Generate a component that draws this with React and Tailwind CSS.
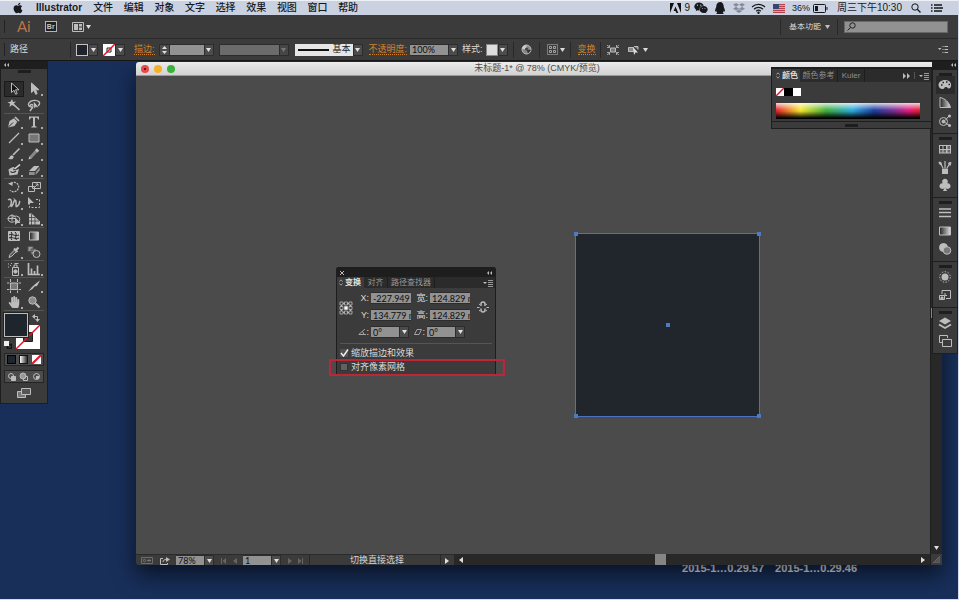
import React from "react";
import { FaApple, FaWeixin, FaQq, FaDropbox, FaHandPaper } from "react-icons/fa";

const G = "#bdbdbd";

function Svg({ w = 14, h = 14, children, className = "" }) {
  return (
    <svg width={w} height={h} viewBox={`0 0 ${w} ${h}`} fill="none" stroke={G} strokeWidth="1" aria-hidden="true" className={`block shrink-0 ${className}`}>
      {children}
    </svg>
  );
}

function Caret({ className = "" }) {
  return (
    <svg width="5" height="4" viewBox="0 0 5 4" aria-hidden="true" className={`block shrink-0 ${className}`}>
      <path d="M0 0h5L2.500 4z" fill="currentColor" />
    </svg>
  );
}

function DropButton({ label, dim }) {
  return (
    <button aria-label={label} disabled={dim} className={`flex h-3 w-[10px] shrink-0 items-center justify-center border border-[#2b2c2b] bg-[#4b4c4b] ${dim ? "text-[#7d7d7d]" : "text-[#e0e0e0]"}`}>
      <Caret />
    </button>
  );
}

function Field({ label, value, className = "" }) {
  return (
    <input aria-label={label} defaultValue={value} className={`h-3 min-w-0 shrink-0 border-y border-[#2b2c2b] bg-[#929292] pl-[2px] font-[Lato,'Liberation_Sans',sans-serif] text-[9px] leading-none text-[#0c0c0c] outline-none ${className}`} />
  );
}

function Divider({ className = "" }) {
  return <span className={`h-4 w-px shrink-0 bg-[#272827] ${className}`} />;
}

function Grip({ className = "" }) {
  return <span className={`mx-auto block h-[3px] w-[13px] shrink-0 bg-[#1d1e1d] ${className}`} />;
}

function MenuIcon() {
  return (
    <Svg w={10} h={8}>
      <path d="M0 3h4L2 5z" fill={G} stroke="none" />
      <path d="M5 1.500h5M5 3.500h5M5 5.500h5M5 7.500h5" stroke="#999" />
    </Svg>
  );
}

const menus = ["文件", "编辑", "对象", "文字", "选择", "效果", "视图", "窗口", "帮助"];

function MenuBar() {
  return (
    <header className="flex h-[15px] shrink-0 items-center border-t border-[#edf0f5] bg-[#cad2e1] text-[10px] leading-none text-[#17191d]">
      <button aria-label="Apple" className="ml-3"><FaApple size={12} /></button>
      <button className="ml-3 font-bold">Illustrator</button>
      <nav className="ml-[11px] flex w-[265px] shrink-0 justify-between font-medium">
        {menus.map((m) => <button key={m}>{m}</button>)}
      </nav>
      <div className="ml-auto flex items-center pr-[15px]">
        <svg width="11" height="10" viewBox="0 0 11 10" aria-hidden="true"><path d="M0 0h4L0 10zM7 0h4v10zM5.500 3.500 8.300 10H6.400L5.600 8H3.600z" fill="#111" /></svg>
        <span className="ml-[3px]">9</span>
        <FaWeixin size={14} className="ml-1" />
        <FaQq size={12} className="ml-[6px]" />
        <FaDropbox size={12} className="ml-[7px] text-[#858b98]" />
        <svg width="15" height="11" viewBox="0 0 15 11" fill="none" stroke="#15171a" strokeWidth="1.200" className="ml-[6px]" aria-hidden="true">
          <path d="M1 4a9.500 9.500 0 0 1 13 0M3 6.200a6.500 6.500 0 0 1 9 0M5.200 8.200a3.500 3.500 0 0 1 4.600 0" /><circle cx="7.500" cy="9.800" r=".6" fill="#15171a" />
        </svg>
        <svg width="12" height="9" viewBox="0 0 12 9" className="ml-[7px]" aria-hidden="true">
          <path d="M0 0h12v9H0z" fill="#c9a9ae" /><path d="M0 .5h12M0 2.500h12M0 4.500h12M0 6.500h12M0 8.500h12" stroke="#b2424c" /><path d="M0 0h6v5H0z" fill="#39456f" />
        </svg>
        <span className="ml-[7px] text-[9px] font-medium">36%</span>
        <svg width="15" height="9" viewBox="0 0 15 9" className="ml-[3px]" aria-hidden="true">
          <rect x=".5" y=".5" width="12" height="8" rx="1" fill="none" stroke="#15171a" /><path d="M2 2h3v5H2zM13.500 3h1v3h-1z" fill="#15171a" />
        </svg>
        <span className="ml-[9px]">周三下午10:30</span>
        <button aria-label="搜索" className="ml-[9px]">
          <svg width="10" height="10" viewBox="0 0 10 10" fill="none" stroke="#15171a" aria-hidden="true"><circle cx="4" cy="4" r="3.200" /><path d="m6.300 6.300 3.200 3.200" strokeWidth="1.300" /></svg>
        </button>
        <button aria-label="通知中心" className="ml-[10px]">
          <svg width="12" height="8" viewBox="0 0 12 8" stroke="#15171a" strokeWidth="1.300" aria-hidden="true"><path d="M0 1h1.500M0 4h1.500M0 7h1.500M3 1h8M3 4h9M3 7h8" /></svg>
        </button>
      </div>
    </header>
  );
}

function AppBar() {
  return (
    <div className="flex h-6 shrink-0 items-center border-b border-[#292a29] bg-[#3a3b3a]">
      <span className="ml-1 h-[13px] w-px bg-[#222]" />
      <span className="ml-3 font-[Lato,sans-serif] text-[15px] leading-none text-[#b87549]">Ai</span>
      <button aria-label="Bridge" className="ml-[14px] flex h-[11px] w-3 items-center justify-center border border-[#b5b5b5] bg-[#202120] text-[7px] font-bold leading-none text-[#c4c4c4]">Br</button>
      <button aria-label="排列文档" className="ml-[15px] flex items-center gap-[2px] text-[#ddd]">
        <Svg w={12} h={10}><path d="M.5.5h11v9H.5z" /><path d="M2 2h4v6H2zM7 2h3v2.500H7zM7 5.500h3V8H7z" fill={G} stroke="none" /></Svg>
        <Caret />
      </button>
      <div className="ml-auto flex items-center pr-[10px]">
        <Divider />
        <div className="relative ml-2 flex items-center">
          <select aria-label="工作区" className="w-[41px] appearance-none bg-transparent text-[8px] leading-none text-[#dcdcdc] outline-none"><option>基本功能</option></select>
          <Caret className="pointer-events-none absolute right-0 text-[#c0c0c0]" />
        </div>
        <Divider className="ml-[7px]" />
        <label className="ml-[6px] flex h-3 w-[104px] items-center border border-[#686868] bg-[#919191] pl-[2px]">
          <Svg w={9} h={9}><circle cx="5.500" cy="3.500" r="2.700" stroke="#222" /><path d="M3.500 5.500.500 8.500" stroke="#222" /></Svg>
          <input aria-label="搜索帮助" className="h-full min-w-0 flex-1 bg-transparent text-[9px] outline-none" />
        </label>
      </div>
    </div>
  );
}

function ControlBar() {
  return (
    <div className="flex h-[22px] shrink-0 items-center border-b border-[#161716] bg-[#3a3b3a] text-[9px] leading-none text-[#dadada]">
      <span className="ml-1 h-[13px] w-px bg-[#222]" />
      <span className="ml-[5px] w-[60px] shrink-0">路径</span>
      <Divider />
      <button aria-label="填色" className="ml-[5px] h-3 w-3 shrink-0 border border-[#c4c4c4] bg-[#1f242c]" />
      <DropButton label="填色选项" />
      <button aria-label="描边颜色" className="ml-[5px] h-3 w-3 shrink-0 bg-white">
        <Svg w={12} h={12}><path d="M4 4h4v4H4z" stroke="#222" /><path d="M0 12 12 0" stroke="#e3152a" strokeWidth="1.500" /></Svg>
      </button>
      <DropButton label="描边颜色选项" />
      <button className="ml-[9px] shrink-0 border-b border-dotted border-[#d0812e] text-[#d0812e]">描边:</button>
      <button aria-label="调整描边粗细" className="ml-1 flex h-3 w-[11px] shrink-0 items-center justify-center border border-[#2b2c2b] bg-[#4b4c4b]">
        <Svg w={5} h={8}><path d="M0 3h5L2.500 0zM0 5h5L2.500 8z" fill="#e0e0e0" stroke="none" /></Svg>
      </button>
      <Field label="描边粗细" value="" className="w-[34px]" />
      <DropButton label="描边粗细选项" />
      <div className="relative ml-[5px] flex shrink-0 items-center">
        <select disabled aria-label="变量宽度配置文件" className="h-3 w-[70px] appearance-none border border-[#2b2c2b] bg-[#6a6b6a] opacity-100"><option></option></select>
        <span className="pointer-events-none absolute right-0 flex h-3 w-[10px] items-center justify-center border border-[#2b2c2b] bg-[#454645] text-[#777]"><Caret /></span>
      </div>
      <button aria-label="画笔定义" className="ml-[6px] flex h-3 w-[58px] shrink-0 items-center gap-1 bg-[#e6e6e6] pl-[3px] text-[#222]">
        <Svg w={31} h={2}><path d="M0 1h31" stroke="#111" strokeWidth="2" /></Svg>基本
      </button>
      <DropButton label="画笔选项" />
      <button className="ml-[6px] shrink-0 border-b border-dotted border-[#d0812e] text-[#d0812e]">不透明度:</button>
      <Field label="不透明度值" value="100%" className="ml-[3px] w-[38px]" />
      <DropButton label="不透明度选项" />
      <span className="ml-1 shrink-0">样式:</span>
      <button aria-label="图形样式" className="ml-[3px] h-3 w-3 shrink-0 border border-[#888] bg-[#dedede]" />
      <DropButton label="图形样式选项" />
      <Divider className="ml-[5px]" />
      <button aria-label="重新着色图稿" className="ml-[7px]">
        <Svg w={11} h={11}><circle cx="5.500" cy="5.500" r="4.500" fill="#888" /><path d="M5.500 5.500V1A4.500 4.500 0 0 0 1 5z" fill="#ccc" stroke="none" /><path d="M5.500 5.500 10 6 7 9.600z" fill="#333" stroke="none" /><circle cx="5.500" cy="5" r="1.500" fill="#444" stroke="none" /></Svg>
      </button>
      <Divider className="ml-[7px]" />
      <button aria-label="对齐选项" className="ml-[7px] flex items-center gap-[2px] text-[#ddd]">
        <Svg w={11} h={11}><path d="M.5.5h10v10H.5z" strokeDasharray="1 1" /><path d="M2.500 2.500h2v2h-2zM6.500 2.500h2v2h-2zM2.500 6.500h2v2h-2zM6.500 6.500h2v2h-2z" strokeWidth=".8" /></Svg>
        <Caret />
      </button>
      <Divider className="ml-[5px]" />
      <button className="ml-[7px] shrink-0 border-b border-dotted border-[#d0812e] text-[#d0812e]">变换</button>
      <Divider className="ml-1" />
      <button aria-label="隔离选中的对象" className="ml-[6px]">
        <Svg w={12} h={10}><path d="M3.500 3h5v4h-5z" fill="#777" /><path d="M0 0l3 2.500M12 0 9 2.500M0 10l3-2.500M12 10 9 7.500M0 2.500h2.500V0M12 2.500H9.500V0M0 7.500h2.500V10M12 7.500H9.500V10" strokeWidth=".8" /></Svg>
      </button>
      <button aria-label="选择类似的对象" className="ml-[9px] flex items-center gap-1 text-[#ddd]">
        <Svg w={11} h={10}><path d="M.5 2.500h5v4h-5zM6 1.500h4v3" fill="#888" /><path d="m5 2 5 5.500H7.500L6 10z" fill="#ddd" stroke="none" /></Svg>
        <Caret />
      </button>
      <button aria-label="控制面板菜单" className="ml-auto mr-[10px]">
        <Svg w={10} h={7}><path d="M0 2h3.500L1.700 4z" fill={G} stroke="none" /><path d="M4.500.5h1M6.500.5H10M4.500 3.500h1M6.500 3.500H10M4.500 6.500h1M6.500 6.500H10" /></Svg>
      </button>
    </div>
  );
}

const tools = [
  [
    ["选择工具", <path d="M4.500 1v9.500L7 8.300l1.700 4 1.500-.7-1.700-3.800H12z" fill="#111" />, 0, 1],
    ["直接选择工具", <path d="M4.500 1v9.500L7 8.300l1.700 4 1.500-.7-1.700-3.800H12z" fill={G} />, 1],
    ["魔棒工具", <><path d="m6.500 6.500 6 5.500" strokeWidth="1.600" /><path d="m5 1 1 3 3-.5L6.800 5.800 8 8.500 5 7 2.500 9l.6-3.200L.5 4.300l3-.5z" fill={G} stroke="none" /></>],
    ["套索工具", <><path d="M5 9C1.500 9 .8 6.500 2 4.800 4 2 9.800 1.500 12 3.800c1.200 1.400.4 3-1 3.700M4.500 9c-2-1-1-3 .5-2.500s1.500 2 .5 3L3 13" strokeWidth="1.400" /><path d="M6.500 3v8l2-1.800 3.500.3z" fill={G} stroke="#333" strokeWidth=".5" /></>],
  ],
  [
    ["钢笔工具", <><path d="M1 12.500 2.500 6 7 3.300 10.300 6.800 7.500 11z" fill={G} stroke="none" /><path d="M1 12.500 6 7.500" stroke="#333" /><path d="m8 2 4 4" strokeWidth="1.700" /></>, 1],
    ["文字工具", <path d="M2 1.500h10v3h-1l-.8-1.700H8V11l1.700.7v.8H4.300v-.8L6 11V2.800H3.800L3 4.500H2z" fill={G} stroke="none" />, 1],
    ["直线段工具", <path d="M2 12 12 2" strokeWidth="1.300" />, 1],
    ["矩形工具", <path d="M2 3h10v8H2z" fill="#777" />, 1],
    ["画笔工具", <><path d="M12.500 1.500 6 8" strokeWidth="1.600" /><path d="M1 11.500c2-.2 1.500-3 4-3.300l1.800 1.600C6.500 12.500 3 13 1 11.500z" fill={G} stroke="none" /></>, 1],
    ["铅笔工具", <><path d="m3 11 6-6.500" stroke="#888" strokeWidth="3" /><path d="m9 4.500 2-2" strokeWidth="3.400" /><path d="m1.500 12.500.7-3 2 2z" fill={G} stroke="none" /></>, 1],
    ["斑点画笔工具", <><path d="M1.500 6.500c3-2 4-2.500 6-2.500L6 7c3 1 4-1 6-1l-1.500 5.500-8 1z" fill={G} stroke="none" /><path d="M13 1.500 7.500 6" stroke="#ddd" strokeWidth="1.600" /><path d="M3.500 8.500c1.500 1.500 4 1 5.500-.5" stroke="#333" strokeWidth="1.200" /></>, 1],
    ["橡皮擦工具", <><path d="m2 8 5-5h5.500L8 8z" fill={G} stroke="none" /><path d="M2 9h5.700v3H2zM8.700 9l4-4.500v3l-4 4.500z" fill="#8f8f8f" stroke="none" /></>, 1],
  ],
  [
    ["旋转工具", <><path d="M4 3.500C8 .5 12.500 4 11.500 8S5 13 3 10" strokeDasharray="2 1" strokeWidth="1.300" /><path d="M1 3.500 5.500 2v4z" fill={G} stroke="none" /></>, 1],
    ["比例缩放工具", <><path d="M5.500 2.500h8v6h-8zM1.500 6.500h6v5h-6z" /><path d="m7 8 4-4M8.500 4H11v2.500" strokeWidth=".9" /></>, 1],
    ["宽度工具", <><path d="M1 4c3-2 4 1 3 4s1 3.500 2 0 2.500-5.500 3-2-1 5.500 1.500 4S12 6 13 5" strokeWidth="1.500" /><path d="M1 11.500 5 8M6.500 2.500l1.500 1" /></>, 1],
    ["自由变换工具", <><path d="M2.500 3v8.500h10V3.500H8" strokeDasharray="2 1.500" /><path d="M1 1v8l2-2h4z" fill={G} stroke="none" /></>],
    ["形状生成器工具", <><path d="M7.500 9.500A4 3.500 0 1 1 8 4.500M5 6.500A4 3.500 0 1 1 9 11M1 6.500h8M5 2.500v7" /><path d="M8 5v8l2-2h3.500z" fill={G} stroke="none" /></>, 1],
    ["透视网格工具", <><path d="M2 1.500h2.500l8.500 8v3H2z" fill={G} stroke="none" /><path d="M4.500 2v11M8 5v8M2 5.500h6M2 9h10" stroke="#333" strokeWidth=".7" /></>, 1],
  ],
  [
    ["网格工具", <><path d="M1.500 2.500h11v9h-11z" fill={G} /><path d="M4 3c3 3-2 5 1 8M8 3c3 3-1 5 1.500 8M2 6c3-2 6 2 10 0M2 9c3-2 6 2 10 0" stroke="#222" /></>],
    ["渐变工具", <path d="M2.500 3h9v8h-9z" fill="url(#tg)" />],
    ["吸管工具", <><path d="m2 12.500 1-3L7.500 5l1.800 1.700-4.500 4.500z" fill="#555" /><path d="M7 3.500 10.500 7M9 5l2.500-2.500" strokeWidth="2" /></>, 1],
    ["混合工具", <><path d="M1 1.500h5v5H1zM4 4h5v5H4z" fill="#999" stroke="#555" /><circle cx="9.500" cy="9" r="3.500" fill="#454645" /></>],
  ],
  [
    ["符号喷枪工具", <><path d="M5.500 5.500h6v8h-6zM7 5V3h3v2" /><circle cx="8.500" cy="9.500" r="1.700" fill={G} /><path d="M1 2h1M3 3.500h1M1 5h1M4 1.500h1M7.500 1.500h4" /></>, 1],
    ["柱形图工具", <path d="M1.500 1v11.500H13M4.500 12V6.500M7.500 12V9M10.500 12V3.500" strokeWidth="1.700" />, 1],
  ],
  [
    ["画板工具", <><path d="M3.500 4h7v6.500h-7z" fill="#777" /><path d="M3.500 0v3M10.500 0v3M3.500 11.500V14M10.500 11.500V14M0 4h2.500M0 10.500h2.500M11.500 4H14M11.500 10.500H14" /></>],
    ["切片工具", <path d="M1 12.500C4 10 4 7.500 13 1.500L10 7l-2.500.5-2 2.500z" fill={G} stroke="none" />, 1],
    ["抓手工具", null, 1],
    ["缩放工具", <><circle cx="5.500" cy="5.500" r="3.700" fill="#8a8a8a" /><path d="m8.500 8.500 4 4" strokeWidth="2.200" /></>],
  ],
];

function Toolbar() {
  return (
    <aside aria-label="工具" className="absolute left-0 top-0 w-12 border-x border-b border-[#1d1e1d] bg-[#3a3b3a]">
      <div className="flex h-2 items-center bg-[#1d1e1d] pl-[3px]"><Chevrons /></div>
      <Grip className="mb-2 mt-px" />
      {tools.map((group, i) => (
        <div key={i} className="mx-[3px] grid grid-cols-2 border-b border-[#545554]">
          {group.map(([name, art, fly, on]) => (
            <button key={name} aria-label={name} className={`relative flex h-4 items-center justify-center ${on ? "border border-[#191a19] bg-[#2a2b2a]" : ""}`}>
              {art ? <Svg>{art}</Svg> : <FaHandPaper size={12} color={G} />}
              {fly ? <span className="absolute bottom-px right-px h-[2px] w-[2px] bg-[#aaa]" /> : null}
            </button>
          ))}
        </div>
      ))}
      <div className="relative mx-[3px] mt-[2px] h-9">
        <button aria-label="描边" className="absolute bottom-0 left-3 h-6 w-6 bg-white">
          <Svg w={24} h={24}><path d="M7.500 7.500h9v9h-9z" fill="#3a3b3a" stroke="#222" /><path d="M0 24 24 0" stroke="#e3152a" strokeWidth="1.500" /></Svg>
        </button>
        <button aria-label="填色" className="absolute left-0 top-0 h-6 w-6 border border-[#bcbcbc] bg-[#1f252d] shadow-[0_0_0_1px_#222]" />
        <button aria-label="互换填色和描边" className="absolute right-1 top-px"><Svg w={8} h={8}><path d="M2 2.500h3.500V6" /><path d="M3 0v5L0 2.500zM3 5h5L5.500 8z" fill={G} stroke="none" /></Svg></button>
        <button aria-label="默认填色和描边" className="absolute bottom-0 left-0"><Svg w={8} h={8}><path d="M3.500 3.500h4v4h-4z" stroke="#111" strokeWidth="1.500" /><path d="M0 0h5v5H0z" fill="#eee" stroke="none" /></Svg></button>
      </div>
      <div className="mx-[3px] mt-1 grid h-[13px] grid-cols-3 items-center justify-items-center border border-[#242524] bg-[#4b4c4b]">
        <button aria-label="颜色" className="h-[9px] w-[9px] border border-black bg-[#1f252d]" />
        <button aria-label="渐变" className="h-[9px] w-[9px] border border-[#111] bg-linear-to-r from-white to-[#333]" />
        <button aria-label="无" className="h-[9px] w-[9px] bg-white"><Svg w={9} h={9}><path d="M0 9 9 0" stroke="#e3152a" strokeWidth="2" /></Svg></button>
      </div>
      <div className="mx-[3px] mt-1 grid h-[13px] grid-cols-3 items-center justify-items-center border border-[#242524] bg-[#4b4c4b]">
        <button aria-label="正常绘图"><Svg w={9} h={9}><circle cx="4" cy="4" r="2.500" /><path d="M4.500 4.500h4v4h-4z" fill={G} /></Svg></button>
        <button aria-label="背面绘图"><Svg w={9} h={9}><path d="M4.500 4.500h4v4h-4z" /><circle cx="4" cy="4" r="3" fill="#999" /></Svg></button>
        <button aria-label="内部绘图"><Svg w={9} h={9}><circle cx="4.500" cy="4.500" r="3" /><path d="M4 4h3v3H4z" fill={G} stroke="none" /></Svg></button>
      </div>
      <button aria-label="更改屏幕模式" className="mx-auto mb-[5px] mt-1 block"><Svg w={14} h={11}><path d="M.5 4.500h8v6h-8z" fill="#777" /><path d="M4.500 1.500h9v6h-9z" fill="#555" /></Svg></button>
      <svg width="0" height="0" className="absolute" aria-hidden="true"><defs><linearGradient id="tg"><stop stopColor="#222" /><stop offset="1" stopColor="#ddd" /></linearGradient></defs></svg>
    </aside>
  );
}

function Chevrons() {
  return <Svg w={5} h={4}><path d="M2 0v4L0 2zM5 0v4L3 2z" fill={G} stroke="none" /></Svg>;
}

const Tri = ({ d, c = "#dedede" }) => <Svg w={5} h={6}><path d={d} fill={c} stroke="none" /></Svg>;
const RIGHT = "M0 0v6l4-3z";
const LEFT = "M4 0v6L0 3z";

function DocumentWindow() {
  return (
    <section aria-label="文档窗口" className="absolute bottom-[34px] left-[136px] right-4 top-px flex flex-col overflow-hidden rounded-t-[3px] rounded-bl-[3px] shadow-[0_10px_22px_rgba(0,0,0,0.6)]">
      <div className="flex h-[14px] shrink-0 items-center border-b border-[#9a9a9a] bg-linear-to-b from-[#ececec] to-[#d2d2d2]">
        <div className="flex w-[60px] gap-[5px] pl-[5px]">
          <button aria-label="关闭窗口" className="flex h-2 w-2 items-center justify-center rounded-full bg-[#e8484a]"><span className="h-[2px] w-[2px] rounded-full bg-[#4d0000]" /></button>
          <button aria-label="最小化" className="h-2 w-2 rounded-full bg-[#f4b02c]" />
          <button aria-label="全屏" className="h-2 w-2 rounded-full bg-[#38b43c]" />
        </div>
        <h1 className="flex-1 pr-[64px] text-center text-[9px] leading-[13px] text-[#4a4a4a]">未标题-1* @ 78% (CMYK/预览)</h1>
      </div>
      <div className="flex min-h-0 flex-1">
        <div className="relative min-w-0 flex-1 bg-[#4b4b4b]">
          <div className="absolute left-[439px] top-[157px] flex h-[184px] w-[185px] items-center justify-center border border-[#4a72c0] bg-[#21262c]">
            <span className="h-1 w-1 bg-[#4d7ac4]" />
            <span className="absolute -left-[2px] -top-[2px] h-1 w-1 bg-[#4d7ac4]" />
            <span className="absolute -right-[2px] -top-[2px] h-1 w-1 bg-[#4d7ac4]" />
            <span className="absolute -bottom-[2px] -left-[2px] h-1 w-1 bg-[#4d7ac4]" />
            <span className="absolute -bottom-[2px] -right-[2px] h-1 w-1 bg-[#4d7ac4]" />
          </div>
        </div>
        <div className="flex w-3 flex-col items-center justify-between border-l border-[#1d1e1d] bg-[#272827] pb-1">
          <span className="mt-[232px] h-[10px] w-full bg-[#858585]" />
          <button aria-label="向下滚动" className="text-[#dedede]"><Caret /></button>
        </div>
      </div>
      <div className="flex h-[11px] shrink-0 overflow-hidden bg-[#3a3b3a] text-[9px] leading-none text-[#d5d5d5]">
        <div className="flex h-3 w-[319px] shrink-0 items-center border-t border-[#2a2b2a] pl-[5px]">
          <Svg w={12} h={7}><path d="M.5.5h11v6H.5z" stroke="#6d6d6d" /><circle cx="3.500" cy="3.500" r="1.200" stroke="#777" /><path d="M6 3.500h4M8 2v3" stroke="#777" /></Svg>
          <button aria-label="共享" className="ml-[7px]"><Svg w={10} h={8}><path d="M3 1.500H.5v6h7V6M3 5c0-2 1.500-2.500 3.500-2.500" /><path d="M6 0v5l4-2.500z" fill={G} stroke="none" /></Svg></button>
          <Field label="缩放" value="78%" className="ml-[6px] w-[28px]" />
          <DropButton label="缩放选项" />
          <button aria-label="首页" className="ml-[7px]"><Tri d="M0 0h1v6H0zM5 0v6L1.500 3z" c="#666" /></button>
          <button aria-label="上一页" className="ml-[7px]"><Tri d={LEFT} c="#666" /></button>
          <Field label="画板" value="1" className="ml-[5px] w-[28px]" />
          <DropButton label="画板选项" />
          <button aria-label="下一页" className="ml-[7px]"><Tri d={RIGHT} c="#666" /></button>
          <button aria-label="末页" className="ml-[5px]"><Tri d="M4 0h1v6H4zM0 0v6l3.500-3z" c="#666" /></button>
          <Divider className="ml-[6px]" />
          <span className="flex-1 pl-1 text-center">切换直接选择</span>
          <Divider />
          <button aria-label="状态选项" className="ml-1"><Tri d={RIGHT} /></button>
          <Divider className="ml-1" />
        </div>
        <div className="flex flex-1 items-center bg-[#272827]">
          <button aria-label="向左滚动" className="ml-1"><Tri d={LEFT} /></button>
          <span className="flex-[190]" />
          <span className="h-full w-[11px] bg-[#858585]" />
          <span className="flex-[254]" />
          <button aria-label="向右滚动" className="mr-1"><Tri d={RIGHT} /></button>
        </div>
        <div className="flex w-3 items-center justify-center border-l border-[#1d1e1d]"><Svg w={7} h={7}><path d="M7 0v7H0z" fill="#505150" stroke="#666" /></Svg></div>
      </div>
    </section>
  );
}

function ColorPanel() {
  return (
    <section aria-label="颜色面板" className="absolute right-[26px] top-[6px] w-[161px] border border-[#1d1e1d] bg-[#3a3b3a] text-[8px] leading-none text-[#8f8f8f]">
      <div className="flex h-[14px] items-stretch border-t border-[#1d1e1d] bg-[#2a2b2a]">
        <button className="flex w-7 items-center gap-[2px] bg-[#3a3b3a] pl-1 font-bold text-[#dedede]"><Sort />颜色</button>
        <button className="w-[38px] border-r border-[#1d1e1d]">颜色参考</button>
        <button className="w-[27px] border-r border-[#1d1e1d]">Kuler</button>
        <button aria-label="展开" className="ml-auto"><Svg w={7} h={6}><path d="M0 0v6l3-3zM4 0v6l3-3z" fill={G} stroke="none" /></Svg></button>
        <span className="mx-1 my-[3px] w-px bg-[#555]" />
        <button aria-label="颜色面板菜单" className="mr-[2px]"><MenuIcon /></button>
      </div>
      <div className="px-1 pb-[2px] pt-[6px]">
        <div className="flex">
          <button aria-label="无" className="h-2 w-2 bg-white"><Svg w={8} h={8}><path d="M0 8 8 0" stroke="#e3152a" strokeWidth="1.500" /></Svg></button>
          <button aria-label="黑色" className="h-2 w-[9px] bg-black" />
          <button aria-label="白色" className="h-2 w-2 bg-white" />
        </div>
        <div className="mr-[7px] mt-[7px] h-4 bg-[linear-gradient(180deg,#fffc_0%,#fff0_45%,#0000_50%,#000_95%),linear-gradient(90deg,#e2202c_0%,#f3e52c_17%,#3fae3c_35%,#2ea9dc_53%,#1b3f9c_68%,#7b2f92_82%,#e01c7d_92%,#e2202c_100%)]" />
      </div>
      <div className="flex h-[7px] items-center border-t border-[#1d1e1d]"><Grip /></div>
    </section>
  );
}

function Sort() {
  return <Svg w={4} h={7}><path d="M.5 2.500 2 .8l1.500 1.700M.5 4.500 2 6.200l1.500-1.700" strokeWidth=".8" /></Svg>;
}

const dock = [
  [
    ["颜色", <><path d="M7 2C3 2 .5 4.500.500 7S3 11.500 5 11s1-2 3-2 1.500 2 3 1.500S13.500 8.500 13 6 10 2 7 2z" fill={G} stroke="none" /><path d="M3 7h1.500M4.500 4.500H6M8 4h1.500M10.500 6.500H12" stroke="#222" strokeWidth="1.500" /></>, 1],
    ["颜色参考", <path d="M2 1.500v10h10.500C11 6 7 2.500 2 1.500z" fill="url(#tg)" />],
    ["Kuler", <><circle cx="5.500" cy="7.500" r="4" /><circle cx="5.500" cy="7.500" r="1.500" fill={G} /><path d="m7 6.500 4-4.500M7 8.500l4.500 3" /><circle cx="11.500" cy="2" r="1.500" fill={G} stroke="none" /><circle cx="11.500" cy="11.500" r="1.500" fill={G} stroke="none" /></>],
  ],
  [
    ["色板", <><path d="M1 3h12v8.500H1z" fill={G} stroke="none" /><path d="M2 4h2.500v3H2zM5.500 4H8v3H5.500z" fill="#333" stroke="none" /><path d="M9.500 4H12v3H9.500zM2 8h2.500v2.500H2zM5.500 8H8v2.500H5.500zM9.500 8H12v2.500H9.500z" fill="#666" stroke="none" /></>],
    ["画笔", <><path d="M4 8.500h6V14H4z" fill={G} stroke="none" /><path d="M5 8 2.500 3.500M7 8V1M9 8l3-5" strokeWidth="1.200" /><path d="m1 2 2 .5.500 2.500-2-1zM10.500 3l2.500-.5-1 3z" fill={G} /></>],
    ["符号", <path d="M7 .8a2.800 2.800 0 0 1 2.300 4.500 2.800 2.800 0 1 1-1.800 4.400L9 13H5l1.500-3.300a2.800 2.800 0 1 1-1.800-4.400A2.800 2.800 0 0 1 7 .8z" fill={G} stroke="none" />],
  ],
  [
    ["描边", <path d="M1 3h12M1 6.500h12M1 10.500h12" strokeWidth="1.500" />],
    ["渐变", <path d="M1.500 3h11v8h-11z" fill="url(#tg)" />],
    ["透明度", <><circle cx="5.500" cy="5.500" r="4" fill={G} /><circle cx="9" cy="8.500" r="3.800" fill="#777" /></>],
  ],
  [
    ["外观", <><circle cx="7" cy="7" r="3.500" fill={G} stroke="none" /><circle cx="7" cy="7" r="5.300" strokeDasharray="1.500 1.500" /></>],
    ["图形样式", <><path d="M4 6V2.500h8.500v8H8M1.500 7.500h5v4h-5z" /><path d="M3 9h2v2H3z" fill={G} /><path d="M7 5v2.500h2" /></>],
  ],
  [
    ["图层", <><path d="m7 1.500 6 3.500-6 3.500L1 5z" fill={G} stroke="none" /><path d="m1 8.500 6 3.500 6-3.500" strokeWidth="1.800" /></>],
    ["画板", <><path d="M4 8.500H1.500v-7h8V4" /><path d="M4.500 5.500h9v7h-9z" /></>],
  ],
];

function Dock() {
  return (
    <aside aria-label="面板" className="absolute right-0 top-0 w-[26px] border-x border-b border-[#1d1e1d] bg-[#3a3b3a]">
      <div className="flex h-2 items-center justify-end bg-[#1d1e1d] pr-px"><Chevrons /></div>
      {dock.map((g, i) => (
        <div key={i} className="flex flex-col items-center border-t border-[#1d1e1d] pb-[3px] pt-[3px]">
          <Grip />
          {g.map(([name, art, on]) => (
            <button key={name} aria-label={name} className={`flex h-[18px] w-[19px] items-center justify-center ${on ? "bg-[#2a2b2a]" : ""}`}><Svg>{art}</Svg></button>
          ))}
        </div>
      ))}
    </aside>
  );
}

function TransformPanel() {
  return (
    <section aria-label="变换面板" className="absolute left-[336px] top-[206px] w-[160px] rounded-t-[2px] border border-[#1d1e1d] bg-[#3a3b3a] text-[9px] leading-none text-[#dadada]">
      <div className="flex h-[9px] items-center justify-between bg-[#1d1e1d] px-[3px]">
        <button aria-label="关闭面板"><Svg w={4} h={4}><path d="m0 0 4 4M4 0 0 4" /></Svg></button>
        <Chevrons />
      </div>
      <div className="flex h-[11px] items-stretch bg-[#2a2b2a] text-[8px] text-[#999]">
        <button className="flex w-[27px] items-center gap-[2px] bg-[#3a3b3a] pl-[2px] font-bold text-[#e4e4e4]"><Sort />变换</button>
        <button className="w-6 border-r border-[#1d1e1d]">对齐</button>
        <button className="w-[47px] border-r border-[#1d1e1d]">路径查找器</button>
        <button aria-label="变换面板菜单" className="ml-auto mr-[2px]"><MenuIcon /></button>
      </div>
      <div className="flex items-start pl-[2px] pt-1">
        <Svg w={14} h={14} className="mt-[9px]">
          <path d="M4 2.500h1.500M8.500 2.500H10M4 11.500h1.500M8.500 11.500H10M2.500 4v1.500M2.500 8.500V10M11.500 4v1.500M11.500 8.500V10" />
          <path d="M1 1h3v3H1zM5.500 1h3v3h-3zM10 1h3v3h-3zM1 5.500h3v3H1zM10 5.500h3v3h-3zM1 10h3v3H1zM5.500 10h3v3h-3zM10 10h3v3h-3z" strokeWidth=".8" />
          <path d="M5.500 5.500h3v3h-3z" fill="#fff" />
        </Svg>
        <div className="flex w-[120px] flex-col gap-[5px]">
          <div className="flex items-center">
            <span className="w-[18px] pr-[2px] text-right">X:</span><Field label="X" value="-227.949 mm" className="w-10" />
            <span className="w-[19px] pr-[2px] text-right">宽:</span><Field label="宽" value="124.829 mm" className="w-10" />
          </div>
          <div className="flex items-center">
            <span className="w-[18px] pr-[2px] text-right">Y:</span><Field label="Y" value="134.779 mm" className="w-10" />
            <span className="w-[19px] pr-[2px] text-right">高:</span><Field label="高" value="124.829 mm" className="w-10" />
          </div>
          <div className="flex items-center">
            <span className="flex w-[18px] items-center justify-end pr-[2px]"><Svg w={8} h={6}><path d="M7 0 .8 5.500H8M4.500 2.500 6 5.500" strokeWidth=".8" /></Svg>:</span>
            <Field label="旋转" value="0°" className="w-[28px]" /><DropButton label="旋转选项" />
            <span className="flex w-[18px] items-center justify-end pr-[2px]"><Svg w={8} h={6}><path d="M3 .5h4.500L5 5.500H.5z" strokeWidth=".8" /></Svg>:</span>
            <Field label="倾斜" value="0°" className="w-[28px]" /><DropButton label="倾斜选项" />
          </div>
        </div>
        <button aria-label="约束宽度和高度比例" className="ml-1 mt-[9px]">
          <Svg w={12} h={12}><path d="M4 5V3a2 2 0 0 1 4 0v2M4 7.500v1.500a2 2 0 0 0 4 0V7.500" strokeWidth="1.500" /><path d="M0 6.500h2.500M9.500 6.500H12M2 3l1 .8M10 3l-1 .8M2 10l1-.8M10 10l-1-.8" /></Svg>
        </button>
      </div>
      <div className="mx-[3px] mt-[5px] border-t border-[#545554] pb-px pt-[2px]">
        <label className="flex h-[14px] items-center gap-[3px]">
          <span className="relative flex h-2 w-2">
            <input type="checkbox" defaultChecked className="peer h-2 w-2 appearance-none bg-[#4f504f]" />
            <Svg w={9} h={8} className="pointer-events-none absolute left-0 top-0 hidden peer-checked:block"><path d="m1 4 2.500 3L8 .5" stroke="#eee" strokeWidth="1.500" /></Svg>
          </span>
          缩放描边和效果
        </label>
        <label className="flex h-[14px] items-center gap-[3px]">
          <input type="checkbox" className="h-2 w-2 appearance-none border border-[#333] bg-[#606160]" />
          对齐像素网格
        </label>
      </div>
    </section>
  );
}

export default function App() {
  return (
    <div className="flex min-h-screen flex-col overflow-hidden border-b border-r border-[#d5dcea] bg-[#182f5a] font-['Liberation_Sans','Noto_Sans_CJK_SC',sans-serif]">
      <MenuBar />
      <AppBar />
      <ControlBar />
      <main className="relative min-h-[520px] flex-1 overflow-hidden sm:min-h-0">
        <div className="absolute bottom-[24px] right-[101px] flex gap-[11px] text-[11px] font-bold leading-[14px] text-[#f0f1f4]">
          <span>2015-1…0.29.57</span>
          <span>2015-1…0.29.46</span>
        </div>
        <DocumentWindow />
        <Toolbar />
        <ColorPanel />
        <Dock />
        <TransformPanel />
        <div className="pointer-events-none absolute left-[329px] top-[298px] h-[17px] w-[176px] border-2 border-[#bf2438]" />
      </main>
    </div>
  );
}
